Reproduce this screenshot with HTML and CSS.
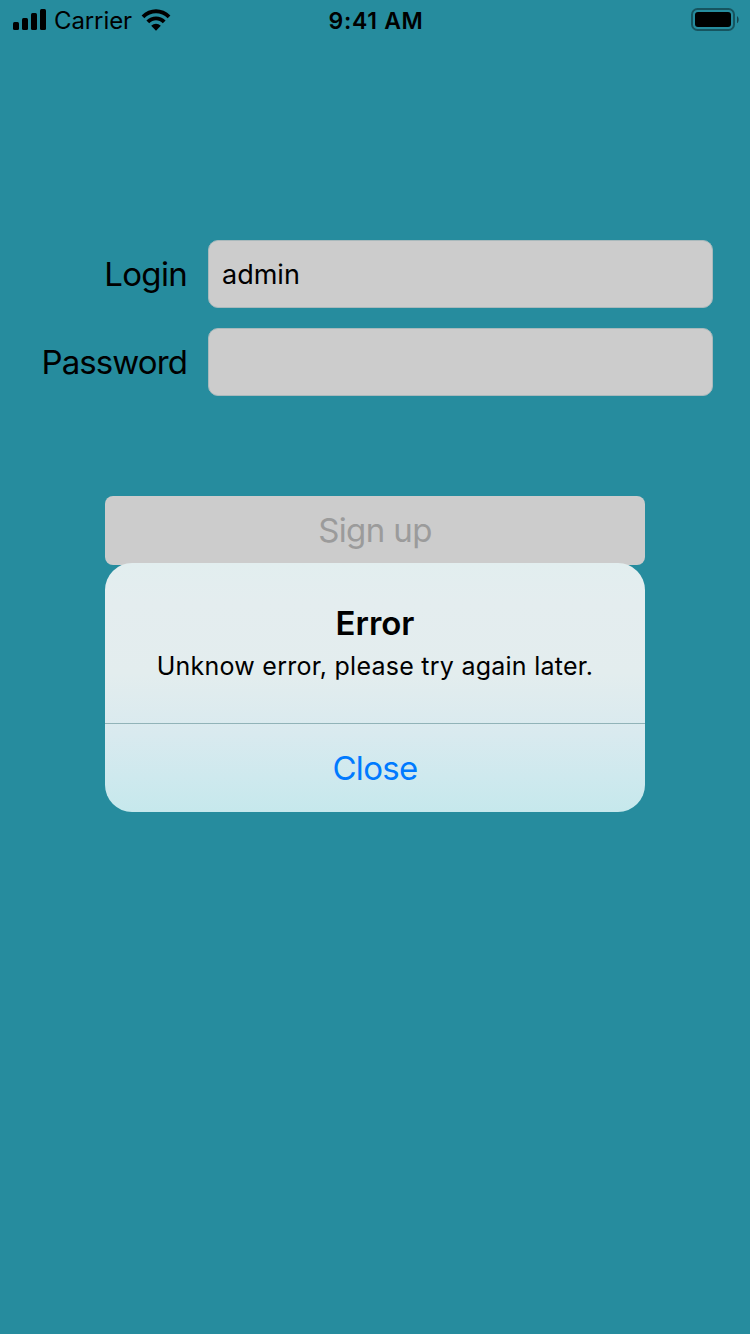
FILE: index.html
```html
<!DOCTYPE html>
<html lang="en">
<head>
<meta charset="utf-8">
<title>Sign up</title>
<link rel="stylesheet" href="styles.css">
</head>
<body>
<div class="screen">
  <header class="status">
    <div class="status-left">
      <svg class="signal" width="34" height="22" viewBox="0 0 34 22">
        <rect x="0" y="13" width="6" height="8" rx="1.5"/>
        <rect x="9" y="9" width="6" height="12" rx="1.5"/>
        <rect x="18" y="4" width="6" height="17" rx="1.5"/>
        <rect x="27" y="0" width="6" height="21" rx="1.5"/>
      </svg>
      <span class="carrier">Carrier</span>
      <svg class="wifi" width="30" height="22" viewBox="0 0 30 22">
        <path d="M.6 6.6C8.7-1.8 21.3-1.8 29.4 6.6L26.7 9.3C20.1 2.6 9.9 2.6 3.3 9.3Z"/>
        <path d="M5.4 11.6C10.9 6 19.1 6 24.6 11.6L21.8 14.3C18 10.3 12 10.3 8.2 14.3Z"/>
        <path d="M10.2 16.7C13 14 17 14 19.8 16.7L15 21.7Z"/>
      </svg>
    </div>
    <span class="time">9:41 AM</span>
    <svg class="battery" width="48" height="23" viewBox="0 0 48 23">
      <rect class="shell" x="1" y="1" width="42" height="21" rx="5.5"/>
      <rect x="4" y="4" width="36" height="15" rx="3"/>
      <path class="cap" d="M46 8c2.2 1.3 2.2 6 0 7.2Z"/>
    </svg>
  </header>
  <main class="content">
    <form class="form">
      <label class="label login" for="login">Login</label>
      <input class="field" id="login" type="text" value="admin">
      <label class="label password" for="password">Password</label>
      <input class="field" id="password" type="password">
    </form>
    <button class="signup" type="button" disabled><span>Sign up</span></button>
  </main>
  <section class="alert" role="alertdialog">
    <div class="alert-body">
      <h1 class="alert-title">Error</h1>
      <p class="alert-message">Unknow error, please try again later.</p>
    </div>
    <button class="alert-close" type="button"><span>Close</span></button>
  </section>
</div>
</body>
</html>
```

FILE: styles.css
```css
* { box-sizing: border-box; }
body { margin: 0; }
.screen {
  position: relative;
  width: 750px;
  height: 1334px;
  overflow: hidden;
  background: #268c9e;
  color: #000;
  font-family: Inter, "Liberation Sans", sans-serif;
}
.status {
  display: grid;
  grid-template-columns: 1fr auto 1fr;
  height: 42px;
  padding: 0 11px 0 13px;
}
.status-left { display: flex; align-items: flex-start; }
.signal, .wifi { margin-top: 9px; }
.carrier { margin: 0 9px 0 7px; font-size: 24px; line-height: 42px; letter-spacing: -0.1px; }
.time { font-size: 23px; font-weight: 600; line-height: 42px; letter-spacing: 0.7px; }
.battery { justify-self: end; margin-top: 8px; }
.shell { fill: none; stroke: rgba(0, 0, 0, 0.4); stroke-width: 2; }
.cap { fill: rgba(0, 0, 0, 0.5); }
.content { padding: 198px 37px 0 0; }
.form {
  display: grid;
  grid-template-columns: 187px 505px;
  grid-auto-rows: 68px;
  gap: 20px 21px;
}
.label { text-align: right; font-size: 33px; line-height: 68px; letter-spacing: -0.9px; }
.login { letter-spacing: -0.7px; }
.field {
  width: 505px;
  height: 68px;
  padding: 0 13px;
  border: 1px solid #a9b9bc;
  border-radius: 10px;
  outline: 0;
  background: #ccc;
  color: #000;
  font: 27px/66px Inter, "Liberation Sans", sans-serif;
  letter-spacing: 0;
}
.signup {
  display: block;
  width: 540px;
  height: 69px;
  margin: 100px 0 0 105px;
  padding: 0;
  border: 0;
  border-radius: 8px;
  background: #ccc;
  color: #9b9b9b;
  font: 33px/69px Inter, "Liberation Sans", sans-serif;
  letter-spacing: -0.6px;
}
.alert {
  position: absolute;
  top: 563px;
  left: 105px;
  width: 540px;
  height: 249px;
  overflow: hidden;
  border-radius: 27px;
  background: linear-gradient(#e2eeef 0, #e4edef 40px, #e3edee 110px, #d9eaef 170px, #cee9ee 215px, #c6e8ec 249px);
  text-align: center;
}
.alert-body { height: 161px; padding-top: 40px; border-bottom: 1px solid #91b3b8; }
.alert-title { margin: 0; font-size: 33px; font-weight: 600; line-height: 40px; letter-spacing: 0; }
.alert-message { margin: 6px 0 0; font-size: 25px; line-height: 34px; letter-spacing: 0.25px; white-space: nowrap; }
.alert-close {
  width: 100%;
  height: 88px;
  padding: 0;
  border: 0;
  background: none;
  color: #007aff;
  font: 33px/88px Inter, "Liberation Sans", sans-serif;
  letter-spacing: -0.7px;
}
```
